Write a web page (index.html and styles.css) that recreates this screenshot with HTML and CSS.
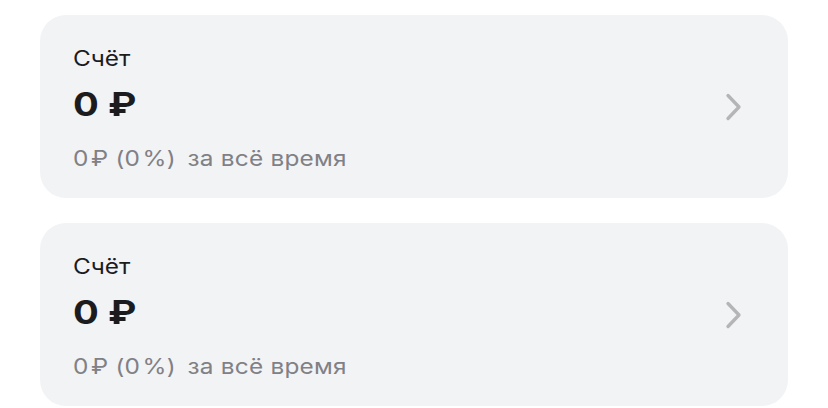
FILE: index.html
```html
<!DOCTYPE html>
<html lang="ru">
<head>
<meta charset="utf-8">
<link rel="stylesheet" href="styles.css">
</head>
<body>
<div class="list">
  <div class="card">
    <div class="info">
      <div class="title">Счёт</div>
      <div class="amount">0 ₽</div>
      <div class="sub">0&#8202;₽ (0&#8202;%)<span class="period">за всё время</span></div>
    </div>
    <svg class="chev" width="20" height="28" viewBox="0 0 20 28"><path d="M4 2.5 L15 14 L4 25.5" fill="none" stroke="#b5b5b9" stroke-width="3.3" stroke-linecap="round" stroke-linejoin="round"/></svg>
  </div>
  <div class="card">
    <div class="info">
      <div class="title">Счёт</div>
      <div class="amount">0 ₽</div>
      <div class="sub">0&#8202;₽ (0&#8202;%)<span class="period">за всё время</span></div>
    </div>
    <svg class="chev" width="20" height="28" viewBox="0 0 20 28"><path d="M4 2.5 L15 14 L4 25.5" fill="none" stroke="#b5b5b9" stroke-width="3.3" stroke-linecap="round" stroke-linejoin="round"/></svg>
  </div>
</div>
</body>
</html>
```
FILE: styles.css
```css
html, body {
  margin: 0;
  padding: 0;
  background: #ffffff;
}
body {
  font-family: Inter, "Noto Sans", sans-serif;
  padding: 15px 40px 0 40px;
}
.list {
  display: flex;
  flex-direction: column;
  gap: 25px;
  width: 748px;
}
.card {
  height: 183px;
  box-sizing: border-box;
  background: #f2f3f5;
  border-radius: 26px;
  display: flex;
  align-items: center;
  justify-content: space-between;
  padding: 0 44px 0 33px;
}
.info {
  display: flex;
  flex-direction: column;
  align-self: flex-start;
  padding-top: 29px;
  transform: scaleX(1.16);
  transform-origin: left center;
}
.title {
  font-size: 21px;
  line-height: 30px;
  color: #1c1c1e;
}
.amount {
  font-size: 33px;
  font-weight: 700;
  line-height: 60px;
  color: #1c1c1e;
}
.sub {
  font-size: 21px;
  line-height: 30px;
  margin-top: 10px;
  letter-spacing: 0.2px;
  color: #808085;
}
.period {
  margin-left: 10px;
}
.chev {
  display: block;
}
```
